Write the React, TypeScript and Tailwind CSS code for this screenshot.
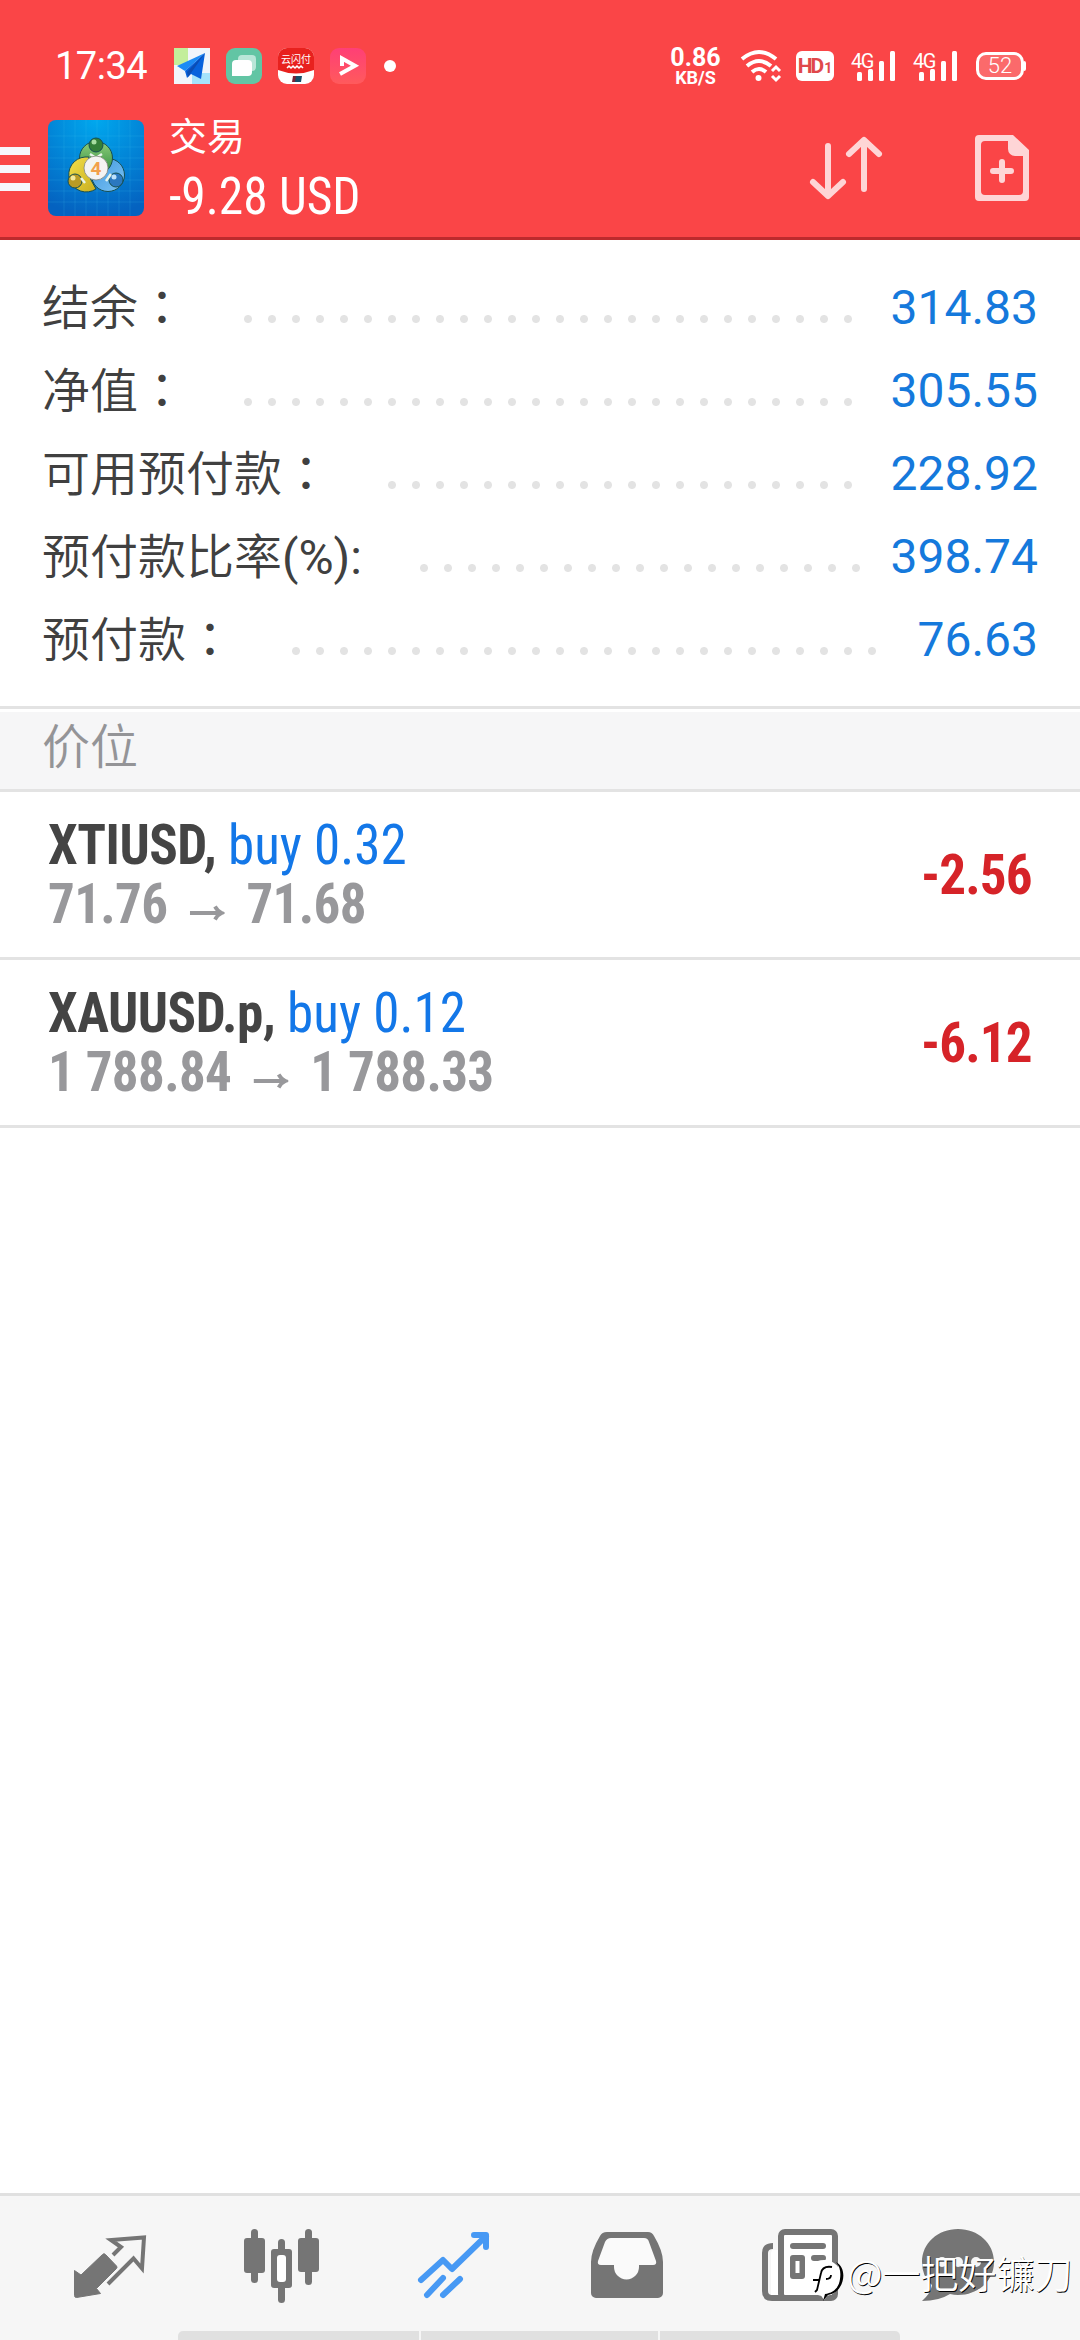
import { type ReactNode } from "react";
import clsx from "clsx";

interface SummaryItem {
	label: string;
	unit?: string;
	dots: number;
	value: string;
}

interface Position {
	symbol: string;
	side: string;
	open: string;
	current: string;
	profit: string;
}

const summary: SummaryItem[] = [
	{ label: "结余", dots: 26, value: "314.83" },
	{ label: "净值", dots: 26, value: "305.55" },
	{ label: "可用预付款", dots: 20, value: "228.92" },
	{ label: "预付款比率", unit: "(%):", dots: 19, value: "398.74" },
	{ label: "预付款", dots: 25, value: "76.63" },
];

const positions: Position[] = [
	{
		symbol: "XTIUSD,",
		side: "buy 0.32",
		open: "71.76",
		current: "71.68",
		profit: "-2.56",
	},
	{
		symbol: "XAUUSD.p,",
		side: "buy 0.12",
		open: "1 788.84",
		current: "1 788.33",
		profit: "-6.12",
	},
];

const condensed =
	"font-['Roboto_Condensed',Roboto,sans-serif] [font-stretch:75%]";

/* Status bar */
const Signal = () => (
	<div className="relative h-9 w-[46px]">
		<span className="absolute left-0 top-[3px] text-[20px] leading-5 tracking-[-1.5px]">
			4G
		</span>
		<svg className="h-9 w-[46px]" viewBox="0 0 46 36" fill="#fff">
			<rect x="6" y="24" width="5" height="9" rx="1.5" />
			<rect x="17" y="21" width="5" height="12" rx="1.5" />
			<rect x="28" y="13" width="5" height="20" rx="1.5" />
			<rect x="39" y="3" width="5" height="30" rx="1.5" />
		</svg>
	</div>
);

const StatusBar = () => (
	<div className="flex h-[108px] items-center pl-[55px] pt-6 text-white">
		<span className="w-[119px] text-[38px] leading-[38px] tracking-[-0.5px]">
			17:34
		</span>

		<div className="flex gap-4">
			<svg className="size-9" viewBox="0 0 36 36">
				<rect width="36" height="36" fill="#f1f5fb" />
				<path d="M0 0h14v17H0z" fill="#c3ee9b" />
				<path d="M18 25h18v11H18z" fill="#a5e3fb" />
				<path d="M31 5 3 18l8 5z" fill="#1c8bf5" />
				<path d="M31 5 11 23l2 7 4-4 10 5z" fill="#0862dc" />
				<path d="M31 5 17 25l-3 4-1-5z" fill="#0b4db4" />
			</svg>
			<svg className="size-9" viewBox="0 0 36 36">
				<rect width="36" height="36" rx="9" fill="#62c5a4" />
				<rect x="12" y="7" width="18" height="16" rx="4" fill="#b9e6d8" />
				<path
					d="M10 12h12a4 4 0 0 1 4 4v8a4 4 0 0 1-4 4H6V16a4 4 0 0 1 4-4z"
					fill="#fff"
				/>
			</svg>
			<div className="relative size-9 overflow-hidden rounded-[9px] bg-white text-center">
				<svg className="size-9" viewBox="0 0 36 36">
					<path d="M0 0h36v22q-18 7-36 0z" fill="#e8211e" />
					<path
						d="M9 20l2-2 2 2 2-2 2 2 2-2 2 2 2-2 2 2"
						stroke="#fff"
						strokeWidth="1.5"
						fill="none"
					/>
					<path d="M15 28h4l-1 6h-4z" fill="#7b2436" />
					<path d="M18 28h6l-1 6h-6z" fill="#15506a" />
				</svg>
				<span className="absolute left-[3px] top-[5px] font-['Noto_Sans_CJK_SC',sans-serif] text-[10px] leading-3">
					云闪付
				</span>
			</div>
			<svg className="size-9" viewBox="0 0 36 36">
				<defs>
					<linearGradient id="play" x1="0" y1="0" x2="0" y2="1">
						<stop offset="0" stopColor="#ff3f76" />
						<stop offset="1" stopColor="#ff5a5c" />
					</linearGradient>
				</defs>
				<rect width="36" height="36" rx="9" fill="url(#play)" />
				<path
					d="M12 18V10.500L25 17.800 10 26"
					fill="none"
					stroke="#fff"
					strokeWidth="4"
				/>
			</svg>
		</div>
		<span className="ml-[18px] size-3 rounded-full bg-white" />

		<div className="ml-[275px] flex w-[49px] flex-col items-center font-bold">
			<span className="text-[25px] leading-[20px]">0.86</span>
			<span className="mt-0.5 text-[18px] leading-[15px]">KB/S</span>
		</div>
		<svg
			className="ml-5 h-9 w-[42px]"
			viewBox="0 0 42 36"
			fill="none"
			stroke="#fff">
			<path d="M2 11Q19-3 36 11" strokeWidth="4" />
			<path d="M7 18Q19 8 31 18" strokeWidth="4" />
			<path d="M12 24Q19 18 26 24" strokeWidth="4" />
			<circle cx="18.500" cy="30" r="3" fill="#fff" stroke="none" />
			<path d="M32 23l4-4 4 4M32 28l4 4 4-4" strokeWidth="3" />
		</svg>
		<div className="ml-[14px] flex h-[30px] w-[38px] items-baseline justify-center rounded-[6px] bg-white font-bold text-[#e0484b]">
			<span className="text-[21px] leading-[30px] tracking-[-2px]">HD</span>
			<span className="ml-0.5 text-[14px] leading-[30px]">1</span>
		</div>
		<div className="ml-[17px] flex gap-4">
			<Signal />
			<Signal />
		</div>
		<div className="ml-[17px] flex items-center">
			<span className="flex h-7 w-12 items-center justify-center rounded-[10px] border-[3px] border-white bg-white/20 text-[22px] font-light leading-none">
				52
			</span>
			<span className="h-2.5 w-0.5 rounded-r bg-white" />
		</div>
	</div>
);

/* Header */
const Logo = () => (
	<svg className="size-24" viewBox="0 0 96 96">
		<defs>
			<radialGradient id="sky" cx="0.5" cy="0" r="1">
				<stop offset="0" stopColor="#00a8ee" />
				<stop offset="1" stopColor="#0462c0" />
			</radialGradient>
			<linearGradient id="green" x1="0" y1="0" x2="0" y2="1">
				<stop offset="0" stopColor="#8fce7b" />
				<stop offset="1" stopColor="#2d8a3c" />
			</linearGradient>
			<linearGradient id="yellow" x1="0" y1="0" x2="1" y2="1">
				<stop offset="0" stopColor="#f2e04b" />
				<stop offset="1" stopColor="#c9ae1f" />
			</linearGradient>
			<linearGradient id="blue" x1="0" y1="0" x2="1" y2="1">
				<stop offset="0" stopColor="#3f95dd" />
				<stop offset="1" stopColor="#7cc4f5" />
			</linearGradient>
		</defs>
		<rect width="96" height="96" rx="8" fill="url(#sky)" />
		<path
			d="M16 0v96M27 0v96M38 0v96M49 0v96M60 0v96M71 0v96M82 0v96M0 16h96M0 27h96M0 38h96M0 49h96M0 60h96M0 71h96M0 82h96"
			stroke="#4fc4f5"
			strokeOpacity="0.16"
		/>
		<g stroke="#174f52" strokeWidth="1">
			<circle cx="60" cy="55" r="16.500" fill="url(#blue)" />
			<circle cx="48" cy="38" r="16.500" fill="url(#green)" />
			<path
				d="M37 37a17.500 17.500 0 1 0 11 32l-5-9-4-12 2-11z"
				fill="url(#yellow)"
			/>
			<circle cx="48" cy="25" r="7" fill="#347f37" />
			<circle cx="27" cy="61" r="7" fill="#b99b25" />
			<circle cx="68" cy="60" r="7" fill="#2b78c0" />
		</g>
		<path
			d="M42 34l6 4 6-4M33 58l4 5M63 54l-5 7"
			stroke="#e9f5ea"
			strokeWidth="2.500"
			fill="none"
		/>
		<circle cx="46" cy="22" r="2.500" fill="#a8dda0" />
		<circle cx="25" cy="58" r="2.500" fill="#f2e9a0" />
		<circle cx="66" cy="57" r="2.500" fill="#bfe2fb" />
		<circle
			cx="48"
			cy="48"
			r="12"
			fill="#f4f4f2"
			stroke="#81857c"
			strokeWidth="0.800"
		/>
		<text
			x="48"
			y="54.500"
			textAnchor="middle"
			fontSize="19"
			fontWeight="700"
			fill="#f2a04a"
			fontFamily="Roboto">
			4
		</text>
	</svg>
);

const Header = () => (
	<header className="h-60 border-b-[3px] border-[#bd2a2d] bg-[#fa4547]">
		<StatusBar />
		<div className="flex items-start">
			<div className="mt-[39px] flex w-[30px] flex-col gap-2.5">
				<span className="h-2 bg-[#f7f5fb]" />
				<span className="h-2 bg-[#f7f5fb]" />
				<span className="h-2 bg-[#f7f5fb]" />
			</div>
			<div className="ml-[18px] mt-3">
				<Logo />
			</div>
			<div className="ml-[25px] flex-1 whitespace-nowrap text-white">
				<p className="text-[38px] leading-[59px]">交易</p>
				<p
					className={clsx(
						condensed,
						"origin-left scale-x-[0.97] text-[51px] leading-[59px]",
					)}>
					-9.28 USD
				</p>
			</div>
			<svg
				className="mt-6 h-[72px] w-20"
				viewBox="0 0 80 72"
				fill="none"
				stroke="#fed5d6"
				strokeWidth="6"
				strokeLinecap="round"
				strokeLinejoin="round">
				<path d="M22 14v48M7 50l15 14 15-14" />
				<path d="M58 57V10M43 22 58 8l15 14" />
			</svg>
			<svg
				className="ml-[85px] mr-[47px] mt-6 h-[72px] w-[62px]"
				viewBox="0 0 62 72">
				<path
					d="M8 3h34l16 15v47a4 4 0 0 1-4 4H8a4 4 0 0 1-4-4V7a4 4 0 0 1 4-4zM14 9a4 4 0 0 0-4 4v46a4 4 0 0 0 4 4h34a4 4 0 0 0 4-4V24h-8a7 7 0 0 1-7-7V9z"
					fill="#fed5d6"
					fillRule="evenodd"
				/>
				<path
					d="M31 30v18M22 39h18"
					stroke="#fed5d6"
					strokeWidth="6"
					strokeLinecap="round"
				/>
			</svg>
		</div>
	</header>
);

/* Account summary */
const SummaryRow = ({ label, unit, dots, value }: SummaryItem) => (
	<div className="flex h-[83px] whitespace-nowrap text-[48px] leading-[83px]">
		<span className="pt-px font-[350] text-[#404040]">
			{label}
			{unit ? (
				<span className="font-normal">{unit}</span>
			) : (
				<span className="font-['Noto_Sans_CJK_TC',sans-serif] font-normal leading-none">
					：
				</span>
			)}
		</span>
		<span
			className="ml-[50px] mt-[41px] h-6 bg-[radial-gradient(circle,#e3e3e3_3.500px,transparent_4.500px)] bg-[length:24px_24px]"
			style={{ width: dots * 24 }}
		/>
		<span className="ml-auto text-[#1579dc]">{value}</span>
	</div>
);

/* Open positions */
const PositionRow = ({ symbol, side, open, current, profit }: Position) => (
	<div
		className={clsx(
			condensed,
			"flex h-[168px] items-start justify-between whitespace-nowrap border-b-[3px] border-[#e3e3e3] px-12 pt-6 text-[55px] leading-[59px]",
		)}>
		<div className="origin-left scale-x-[0.965]">
			<p className="font-bold tracking-[-0.5px] text-[#444]">
				{symbol}{" "}
				<span className="font-normal tracking-normal text-[#1377e8]">
					{side}
				</span>
			</p>
			<p className="flex font-bold tracking-[-0.7px] text-[#98989b]">
				{open}
				<svg
					className="mx-[23px] mt-[30px] h-4 w-9"
					viewBox="0 0 36 16"
					fill="none"
					stroke="currentColor"
					strokeWidth="4">
					<path d="M0 8h33M26 1.500q3 5 7 6.500-4 1.500-7 6.500" />
				</svg>
				{current}
			</p>
		</div>
		<span className="mt-[30px] origin-right scale-x-[0.965] font-bold tracking-[-0.9px] text-[#d62328]">
			{profit}
		</span>
	</div>
);

/* Bottom navigation */
const TabIcon = ({ children }: { children: ReactNode }) => (
	<svg className="h-[135px] w-[172px]" viewBox="0 0 172 135" fill="#757575">
		{children}
	</svg>
);

const TabBar = () => (
	<nav className="relative h-[147px] border-t-[3px] border-[#e0e0e0] bg-[#f6f6f6]">
		<div className="flex px-6">
			<TabIcon>
				<path
					d="M50.500 74.500v25a2 2 0 0 0 2 2l24-4-4-5 20-20a2 2 0 0 0 0-2.500L81.500 58.500a2 2 0 0 0-3 0L57 79z"
					stroke="#757575"
					strokeWidth="1"
				/>
				<path
					d="M89 59l8-8-10-7 33-2.500-2 31-8.500-10L84 88"
					fill="none"
					stroke="#757575"
					strokeWidth="4"
				/>
			</TabIcon>
			<TabIcon>
				<rect x="55" y="33" width="7" height="54" rx="3.500" />
				<rect x="48" y="42" width="21" height="35" rx="3" />
				<rect x="109" y="33" width="7" height="56" rx="3.500" />
				<rect x="102" y="42" width="21" height="34" rx="3" />
				<rect x="82" y="43" width="7" height="64" rx="3.500" />
				<rect x="75" y="53" width="21" height="39" rx="3" />
				<rect x="81" y="59" width="9" height="27" rx="3" fill="#fff" />
			</TabIcon>
			<TabIcon>
				<g
					fill="none"
					stroke="#4799f4"
					strokeWidth="6"
					strokeLinecap="round"
					strokeLinejoin="round">
					<path d="M53 84l22-20 9 9 34-33" />
					<path d="M106 39h12v12" />
					<path d="M59 99l16-17M75 99l17-16" />
				</g>
			</TabIcon>
			<TabIcon>
				<path d="M67 36h41q4 0 6 4 9 15 9 26v31a5 5 0 0 1-5 5H56a5 5 0 0 1-5-5V66q0-11 9-26 2-4 7-4z" />
				<path
					d="M71 42h33q4 0 5 4l7 19q1 4-3 4H99v2a12.500 12.500 0 0 1-25 0v-2H61q-4 0-3-4l7-19q2-4 6-4z"
					fill="#fafafa"
				/>
			</TabIcon>
			<TabIcon>
				<path
					d="M61 50q-8 0-8 7v38q0 7 7 7h59"
					fill="none"
					stroke="#757575"
					strokeWidth="6"
				/>
				<path d="M60 54h6v45h-7V57z" fill="#fff" />
				<rect
					x="69"
					y="36"
					width="54"
					height="66"
					rx="4"
					fill="#fff"
					stroke="#757575"
					strokeWidth="6"
				/>
				<rect x="78" y="47" width="36" height="6" rx="3" />
				<rect x="78" y="59" width="15" height="24" rx="3" />
				<rect x="83.500" y="65" width="4" height="12" fill="#fff" />
				<rect x="99" y="59" width="15" height="6" rx="3" />
				<rect x="99" y="71" width="15" height="6" rx="3" />
			</TabIcon>
			<TabIcon>
				<path d="M74 33c20 0 36 14 36 33S94 99 74 99q-4 0-8-1-11 7-28 7 9-8 10-16Q38 81 38 66c0-19 16-33 36-33z" />
				<circle cx="58" cy="66" r="5" fill="#f6f6f6" />
				<circle cx="74" cy="66" r="5" fill="#f6f6f6" />
				<circle cx="92" cy="66" r="5" fill="#f6f6f6" />
			</TabIcon>
		</div>
		<div className="ml-[178px] flex h-[9px] w-[722px] gap-0.5 overflow-hidden rounded-t-[5px]">
			<span className="w-[241px] bg-[#e0e0e0]" />
			<span className="w-[237px] bg-[#e0e0e0]" />
			<span className="flex-1 bg-[#e0e0e0]" />
		</div>

		{/* Watermark over the tabs */}
		<div className="absolute left-[806px] top-[58px] flex items-center whitespace-nowrap text-white">
			<svg className="h-12 w-10" viewBox="0 0 40 48">
				<circle cx="18" cy="24" r="18" fill="#fff" />
				<path d="M14 40h9l-5 6z" fill="#fff" />
				<path
					d="M26 13c-6-1-10 1-11 6l-4 17-2 2M7 26h7M20 25c4 0 5-2 5-4"
					fill="none"
					stroke="#000"
					strokeWidth="1.800"
				/>
				<path
					d="M30 8c9 5 9 17 4 25-3 5-7 7-12 8l-5 6 2-7c8-1 14-6 15-15 1-7 0-12-4-17z"
					fill="#000"
				/>
			</svg>
			<span className="-mt-3 ml-px font-['Noto_Sans_CJK_SC',sans-serif] text-[38px] font-[350] leading-[48px] [text-shadow:0.8px_0.8px_0.400px_#000]">
				@一把好镰刀
			</span>
		</div>
	</nav>
);

export default function App() {
	return (
		<div className="flex h-[2340px] w-[1080px] flex-col overflow-hidden bg-white font-[Roboto,'Noto_Sans_CJK_SC',sans-serif]">
			<Header />
			<main className="flex-1">
				<section className="border-b-[3px] border-[#e3e3e3] px-[42px] pb-[25px] pt-[26px]">
					{summary.map((item) => (
						<SummaryRow key={item.label} {...item} />
					))}
				</section>
				<h2 className="mt-[3px] h-20 border-b-[3px] border-[#e3e3e3] bg-[#f6f6f7] pl-[42px] text-[48px] font-[350] leading-[71px] text-[#949497]">
					价位
				</h2>
				{positions.map((position) => (
					<PositionRow key={position.symbol} {...position} />
				))}
			</main>
			<TabBar />
		</div>
	);
}
